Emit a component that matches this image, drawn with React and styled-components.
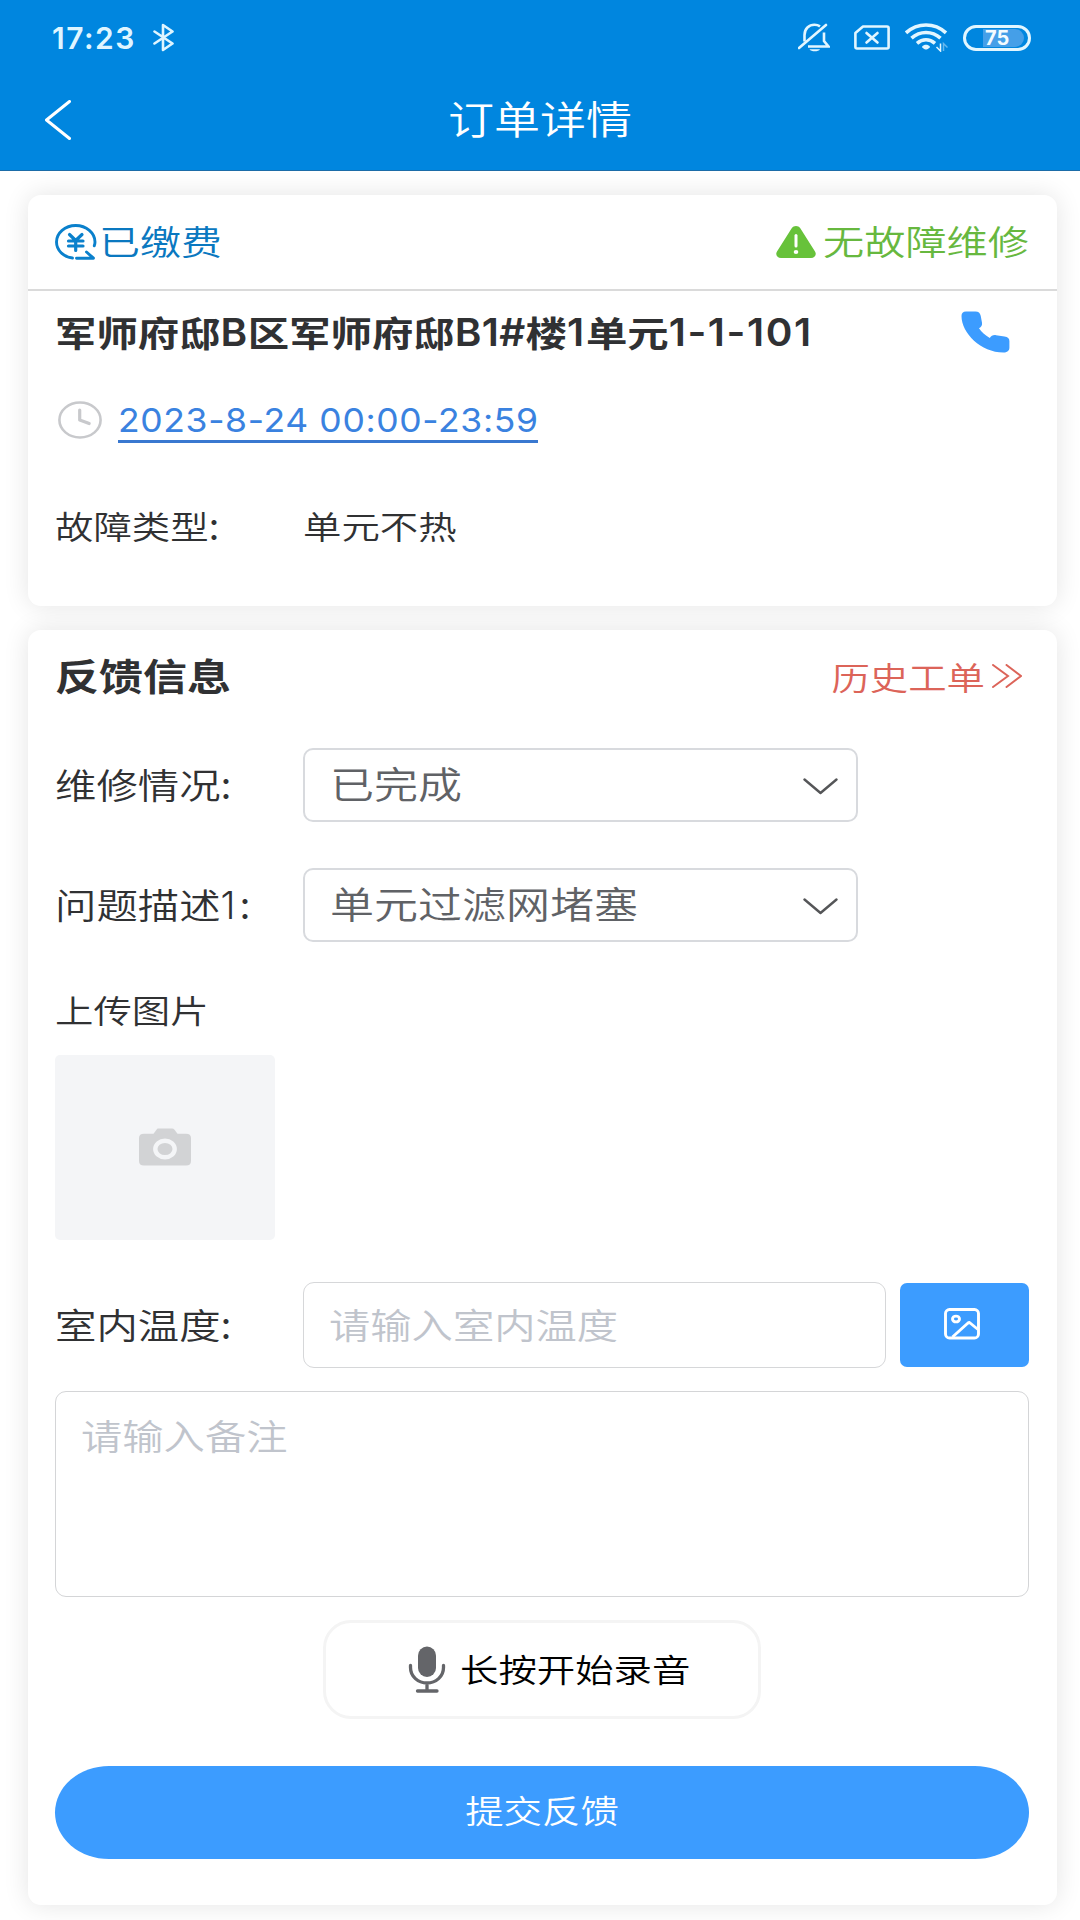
import React from "react";
import styled, { createGlobalStyle } from "styled-components";

const cjk = `"Noto Sans CJK SC", "Noto Sans", sans-serif`;
const latin = `Inter, Roboto, "Noto Sans CJK SC", sans-serif`;

const GlobalStyle = createGlobalStyle`
  * { box-sizing: border-box; }
  body { margin: 0; background: #fff; font-family: ${cjk}; overflow: hidden; }
  svg { display: block; flex: none; }
`;

const Screen = styled.div`
  width: 1080px;
  height: 1920px;
  overflow: hidden;
  background: #fff;
`;

/* Wide letterforms: full advance width, reduced height. */
const Text = styled.span`
  display: inline-block;
  flex: none;
  white-space: nowrap;
  font-family: ${cjk};
  font-size: ${(p) => p.$size || 38.4}px;
  font-weight: ${(p) => p.$weight || 350};
  line-height: 50px;
  color: ${(p) => p.$color || "#303133"};
  transform: translateY(${(p) => p.$shift ?? -1.7}px) scaleY(0.84);
`;

const Latin = styled.span`
  display: inline-block;
  flex: none;
  white-space: nowrap;
  font-family: ${latin};
  font-size: ${(p) => p.$size}px;
  font-weight: ${(p) => p.$weight || 400};
  letter-spacing: ${(p) => p.$spacing || 0}px;
  line-height: ${(p) => p.$line || 50}px;
  color: ${(p) => p.$color || "#303133"};
  transform: scaleY(${(p) => p.$squash || 1});
`;

const Header = styled.header`
  height: 171px;
  background: #0086df;
  border-bottom: 1px solid #1b6ca8;
`;

const StatusBar = styled.div`
  height: 75px;
  padding: 0 49px 0 52px;
  display: flex;
  align-items: center;
  justify-content: space-between;
`;

const StatusGroup = styled.div`
  display: flex;
  align-items: center;
  gap: ${(p) => p.$gap}px;
`;

const MuteSlot = styled.div`
  margin-right: 9px;
`;

const Battery = styled.div`
  width: 68px;
  height: 26px;
  border: 3px solid #e2f6ff;
  border-radius: 13px;
  display: flex;
  align-items: center;
  padding-left: 17px;
`;

const BatteryLevel = styled.div`
  width: 41px;
  height: 18px;
  border-radius: 0 9px 9px 0;
  background: #459fe8;
  color: #f4fbff;
  font: 700 20px/18px ${latin};
  padding-left: 2px;
`;

const NavBar = styled.div`
  height: 90px;
  padding: 0 45px;
  display: grid;
  grid-template-columns: 26px 1fr 26px;
  align-items: center;
  justify-items: center;
`;

const Card = styled.section`
  width: 1029px;
  height: ${(p) => p.$height}px;
  margin: ${(p) => p.$top}px 0 0 28px;
  border-radius: 13px;
  background: #fff;
  box-shadow: 0 0 26px rgba(0, 0, 0, 0.11);
`;

const Row = styled.div`
  display: flex;
  align-items: center;
  height: ${(p) => p.$height}px;
  margin-top: ${(p) => p.$top || 0}px;
  padding: 0 ${(p) => p.$right || 28}px 0 27px;
  justify-content: ${(p) => (p.$between ? "space-between" : "flex-start")};
`;

const CardHead = styled(Row)`
  border-bottom: 2px solid #dadada;
`;

const Tag = styled.div`
  display: flex;
  align-items: center;
  gap: ${(p) => p.$gap}px;
`;

const Address = styled.h1`
  display: flex;
  align-items: center;
  margin: 0;
`;

const PhoneLink = styled.a`
  display: block;
  margin: -3px 19px 0 0;
`;

const Schedule = styled.div`
  display: flex;
  align-items: center;
  padding-left: 3px;
`;

const DateLink = styled.a`
  display: block;
  width: 420px;
  height: 45px;
  margin-left: 16px;
  border-bottom: 3px solid #3978d0;
`;

const Label = styled.div`
  display: flex;
  align-items: center;
  flex: none;
  width: 248px;
`;

const Select = styled.div`
  display: flex;
  align-items: center;
  justify-content: space-between;
  width: 555px;
  height: 74px;
  padding: 3px 18px 0 25px;
  border: 2px solid #d8dade;
  border-radius: 10px;
`;

const Upload = styled.div`
  display: flex;
  align-items: center;
  justify-content: center;
  width: 220px;
  height: 185px;
  margin: 20px 0 0 27px;
  padding-bottom: 2px;
  border-radius: 5px;
  background: #f4f5f7;
`;

const Input = styled.div`
  display: flex;
  align-items: center;
  width: 583px;
  height: 86px;
  padding-left: 25px;
  border: 1px solid #d6d7d9;
  border-radius: 11px;
`;

const PictureButton = styled.button`
  display: flex;
  align-items: center;
  justify-content: center;
  width: 129px;
  height: 84px;
  margin-left: 14px;
  padding: 0 6px 2px 0;
  border: 0;
  border-radius: 7px;
  background: #3c9cff;
`;

const Remark = styled.div`
  width: 974px;
  height: 206px;
  margin: 23px 0 0 27px;
  padding: 20px 25px;
  border: 1px solid #d4d5d7;
  border-radius: 11px;
`;

const RecordButton = styled.div`
  display: flex;
  align-items: center;
  width: 438px;
  height: 99px;
  margin: 23px 0 0 295px;
  padding: 0 0 1px 82px;
  gap: 14px;
  border: 3px solid #f4f4f4;
  border-radius: 28px;
`;

const Submit = styled.div`
  display: flex;
  align-items: center;
  justify-content: center;
  width: 974px;
  height: 93px;
  margin: 47px 0 0 27px;
  padding-bottom: 4px;
  border-radius: 54px / 46.5px;
  background: #3c9cff;
`;

const BluetoothIcon = () => (
  <svg width="21" height="29" viewBox="0 0 21 29" fill="none" stroke="#dff5ff" strokeWidth="2.6" strokeLinejoin="round" strokeLinecap="round">
    <path d="M1.500 8.500 19.500 20.500 10 27V2L19.500 8.500 1.500 20.500" />
  </svg>
);

const BellOffIcon = () => (
  <svg width="32" height="29" viewBox="0 0 32 29" fill="none" stroke="#e2f6ff" strokeWidth="2.6">
    <path d="M1 25 28 2" strokeLinecap="round" />
    <path d="M6.500 18.500V12C6.500 5.500 11 1.800 16.500 1.800c2.200 0 4 .6 5.500 1.600" />
    <path d="M26 9.500v8.500l4.500 5.500H10" />
    <path d="M11.500 26.200h10.500c-1.500 2.800-9 2.800-10.500 0Z" fill="#e2f6ff" stroke="none" />
  </svg>
);

const NoSimIcon = () => (
  <svg width="36" height="25" viewBox="0 0 36 25" fill="none" stroke="#e2f6ff" strokeWidth="2.6" strokeLinejoin="round">
    <path d="M9 1.500H33q1.600 0 1.600 1.500V22q0 1.500-1.600 1.500H3Q1.400 23.500 1.400 22V8Z" />
    <path d="m12.500 8 11 9.500m0-9.500-11 9.500" strokeLinecap="round" />
  </svg>
);

const WifiIcon = () => (
  <svg width="43" height="29" viewBox="0 0 43 29" fill="none" stroke="#e2f6ff" strokeWidth="3.600">
    <path d="M1 9.800C12.500-.7 29.500-.7 41 9.800" />
    <path d="M6.500 15.200c8.500-7.600 20.500-7.600 29 0" />
    <path d="M12 20.300c5.500-4.700 12.500-4.700 18 0" />
    <path d="M21 26.500c-1.400 0-4-1.700-4-2.800 2.200-2.500 5.800-2.500 8 0 0 1.100-2.600 2.800-4 2.800Z" fill="#e2f6ff" stroke="none" />
    <path d="M35.500 20.500v7.500l-4-4" strokeWidth="1.500" />
    <path d="M38.500 28v-7.500l4 4" strokeWidth="1.500" opacity=".45" />
  </svg>
);

const BackIcon = () => (
  <svg width="26" height="40" viewBox="0 0 26 40" fill="none" stroke="#fff" strokeWidth="3" strokeLinecap="round" strokeLinejoin="round">
    <path d="M24.500 1.500 1.500 20l23 18.500" />
  </svg>
);

const PaidIcon = () => (
  <svg width="42" height="36" viewBox="0 0 42 36" fill="none" stroke="#0a80cc" strokeWidth="2.900" strokeLinecap="round" strokeLinejoin="round">
    <path d="M17.500 34C8.500 33 1.500 26.200 1.500 18 1.500 9 10 1.500 20.700 1.500S40 9 40 18c0 1.200-.2 2.400-.7 3.800" />
    <path d="M21.500 34.200H38.500L31.500 28" />
    <path d="m14.500 10.500 6.200 6 6.300-6M13.500 17h14.500M13.500 22h14.500M20.700 17v9.500" strokeWidth="3.200" />
  </svg>
);

const WarnIcon = () => (
  <svg width="40" height="32" viewBox="0 0 40 32">
    <path d="M15.700 2.200c2-2.900 6.600-2.900 8.600 0L39 25.500c2 3-.2 6.500-4 6.500H5c-3.800 0-6-3.500-4-6.500Z" fill="#67c23a" />
    <path d="M20 9.500v10.500" stroke="#fff" strokeWidth="3" strokeLinecap="round" />
    <ellipse cx="20" cy="26" rx="2.300" ry="1.900" fill="#fff" />
  </svg>
);

const PhoneIcon = () => (
  <svg width="49" height="42" viewBox="0 0 49 42">
    <path d="M5 .5h9.500c3 0 4.600 1.500 5.200 4.200l1.300 7c.4 2.500-.7 4.300-3 5.600 2.500 3.600 6 7 10.800 9.700 1.200-2.200 3.500-3.200 6.200-2.800l8.500 1.300c3.300.5 4.900 2 4.900 4.600v6.400c0 3.300-2.300 5-6 5C20 41.500.5 22 .5 5 .5 2.200 2 .5 5 .5Z" fill="#3c9cff" />
  </svg>
);

const ClockIcon = () => (
  <svg width="44" height="38" viewBox="0 0 44 38" fill="none" stroke="#c8c9cc" strokeWidth="2.600">
    <ellipse cx="22" cy="19" rx="20.600" ry="17.500" />
    <path d="M21.700 9v10l9.500 3.500" strokeWidth="3.200" strokeLinecap="round" strokeLinejoin="round" />
  </svg>
);

const MoreIcon = () => (
  <svg width="30" height="24" viewBox="0 0 30 24" fill="none" stroke="#dc6459" strokeWidth="2" strokeLinecap="round">
    <path d="m1 1 15 11L1 23M14.500 1l14.500 11-14.500 11" />
  </svg>
);

const ChevronIcon = () => (
  <svg width="35" height="17" viewBox="0 0 35 17" fill="none" stroke="#555658" strokeWidth="2.400" strokeLinecap="round" strokeLinejoin="round">
    <path d="m1.500 1.500 16 13.500 16-13.500" />
  </svg>
);

const CameraIcon = () => (
  <svg width="52" height="38" viewBox="0 0 52 38">
    <path d="M19 .5h14q1.500 0 2.500 1.200l3 4H47q5 0 5 4.300v23q0 4.500-5 4.500H5q-5 0-5-4.500V10q0-4.300 5-4.300h9.500l3-4Q18.200.5 19 .5Z" fill="#d2d3d5" />
    <ellipse cx="26" cy="21" rx="9.700" ry="8.300" fill="#d2d3d5" stroke="#f4f5f7" strokeWidth="4.400" />
  </svg>
);

const PictureIcon = () => (
  <svg width="36" height="32" viewBox="0 0 36 32" fill="none" stroke="#fff" strokeWidth="2.900" strokeLinejoin="round">
    <rect x="1.500" y="1.500" width="33" height="28.500" rx="4" />
    <ellipse cx="12" cy="11" rx="3.500" ry="2.900" />
    <path d="M8.500 29 24 15l1.500-.5L34 21.500" />
  </svg>
);

const MicIcon = () => (
  <svg width="38" height="47" viewBox="0 0 38 47" fill="none" stroke="#646569" strokeWidth="3.300" strokeLinecap="round">
    <rect x="10" y="0.500" width="18" height="30.500" rx="9" fill="#646569" stroke="none" />
    <path d="M2.500 19.500v2c0 9 7.500 15.500 16.500 15.500s16.500-6.500 16.500-15.500v-2M19 37v8M9.500 45h19.500" />
  </svg>
);

const fields = [
  { label: "维修情况", value: "已完成", top: 27 },
  { label: "问题描述", index: "1", value: "单元过滤网堵塞", top: 46 },
];

const address = [
  { text: "军师府邸" },
  { code: "B", spacing: 0.5 },
  { text: "区军师府邸" },
  { code: "B1#", spacing: 0.3 },
  { text: "楼" },
  { code: "1", spacing: 1.8 },
  { text: "单元" },
  { code: "1-1-101", spacing: 1.6 },
];

function FieldLabel({ children, index, size = 41.4, shift = -0.8 }) {
  return (
    <Label>
      <Text $size={size} $shift={shift}>{children}</Text>
      {index && <Latin $size={38} $weight={300} $spacing={4}>{index}</Latin>}
      <Latin $size={38}>:</Latin>
    </Label>
  );
}

export default function App() {
  return (
    <Screen>
      <GlobalStyle />
      <Header>
        <StatusBar>
          <StatusGroup $gap={17}>
            <Latin $size={30} $weight={600} $spacing={1.5} $color="#dff5ff">17:23</Latin>
            <BluetoothIcon />
          </StatusGroup>
          <StatusGroup $gap={15}>
            <MuteSlot><BellOffIcon /></MuteSlot>
            <NoSimIcon />
            <WifiIcon />
            <Battery><BatteryLevel>75</BatteryLevel></Battery>
          </StatusGroup>
        </StatusBar>
        <NavBar>
          <BackIcon />
          <Text $size={46} $color="#fff" $shift={-3}>订单详情</Text>
        </NavBar>
      </Header>

      <Card $top={24} $height={411}>
        <CardHead $height={96} $between>
          <Tag $gap={2}>
            <PaidIcon />
            <Text $size={41} $color="#0a78c0" $shift={-2}>已缴费</Text>
          </Tag>
          <Tag $gap={7}>
            <WarnIcon />
            <Text $size={41.2} $color="#67b83f" $shift={-2}>无故障维修</Text>
          </Tag>
        </CardHead>
        <Row $height={84} $between>
          <Address>
            {address.map((part, i) =>
              part.text ? (
                <Text key={i} $size={41.4} $weight={700} $shift={-1}>{part.text}</Text>
              ) : (
                <Latin key={i} $size={40.5} $squash={0.94} $weight={600} $spacing={part.spacing}>{part.code}</Latin>
              )
            )}
          </Address>
          <PhoneLink><PhoneIcon /></PhoneLink>
        </Row>
        <Row $height={48} $top={21}>
          <Schedule>
            <ClockIcon />
            <DateLink><Latin $size={35.5} $weight={380} $squash={0.93} $line={45} $spacing={0.63} $color="#3a82e0">2023-8-24 00:00-23:59</Latin></DateLink>
          </Schedule>
        </Row>
        <Row $height={50} $top={57}>
          <FieldLabel size={38.4} shift={-1.5}>故障类型</FieldLabel>
          <Text $shift={-1.5}>单元不热</Text>
        </Row>
      </Card>

      <Card $top={24} $height={1275}>
        <Row $height={91} $right={35} $between>
          <Text $size={44} $weight={700} $shift={-1}>反馈信息</Text>
          <Tag $gap={7}>
            <Text $color="#dc6459" $shift={-0.5}>历史工单</Text>
            <MoreIcon />
          </Tag>
        </Row>
        {fields.map((f) => (
          <Row key={f.label} $height={74} $top={f.top}>
            <FieldLabel index={f.index}>{f.label}</FieldLabel>
            <Select>
              <Text $size={44} $color="#606266" $shift={-3.6}>{f.value}</Text>
              <ChevronIcon />
            </Select>
          </Row>
        ))}
        <Row $height={50} $top={43}>
          <Text>上传图片</Text>
        </Row>
        <Upload><CameraIcon /></Upload>
        <Row $height={86} $top={42}>
          <FieldLabel>室内温度</FieldLabel>
          <Input><Text $size={41.3} $color="#c0c4cc" $shift={-1}>请输入室内温度</Text></Input>
          <PictureButton><PictureIcon /></PictureButton>
        </Row>
        <Remark><Text $size={41.3} $color="#c0c4cc" $shift={-2}>请输入备注</Text></Remark>
        <RecordButton>
          <MicIcon />
          <Text $color="#000">长按开始录音</Text>
        </RecordButton>
        <Submit><Text $color="#fff" $shift={-2.5}>提交反馈</Text></Submit>
      </Card>
    </Screen>
  );
}
